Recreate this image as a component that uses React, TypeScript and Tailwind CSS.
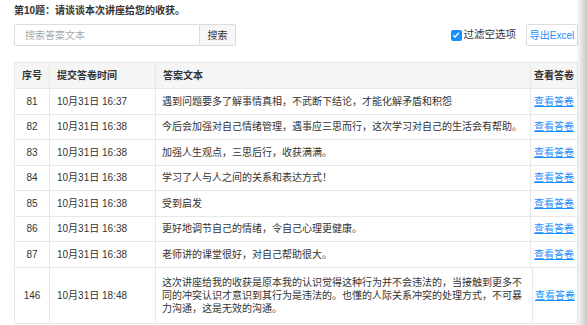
import React from 'react';

type Row = { no: number; time: string; text: React.ReactNode };

const rows: Row[] = [
  { no: 81, time: '10月31日 16:37', text: '遇到问题要多了解事情真相，不武断下结论，才能化解矛盾和积怨' },
  { no: 82, time: '10月31日 16:38', text: '今后会加强对自己情绪管理，遇事应三思而行，这次学习对自己的生活会有帮助。' },
  { no: 83, time: '10月31日 16:38', text: '加强人生观点，三思后行，收获满满。' },
  { no: 84, time: '10月31日 16:38', text: '学习了人与人之间的关系和表达方式！' },
  { no: 85, time: '10月31日 16:38', text: '受到启发' },
  { no: 86, time: '10月31日 16:38', text: '更好地调节自己的情绪，令自己心理更健康。' },
  { no: 87, time: '10月31日 16:38', text: '老师讲的课堂很好，对自己帮助很大。' },
];

const longAnswer = (
  <>
    这次讲座给我的收获是原本我的认识觉得这种行为并不会违法的，当接触到更多不
    <br />
    同的冲突认识才意识到其行为是违法的。也懂的人际关系冲突的处理方式，不可暴
    <br />
    力沟通，这是无效的沟通。
  </>
);

const font = { fontFamily: '"Liberation Sans", "Noto Sans CJK SC", sans-serif' };

function Cols({ last }: { last: number }) {
  return (
    <colgroup>
      <col className="w-[35px]" />
      <col className="w-[106px]" />
      <col style={{ width: last }} />
      <col />
    </colgroup>
  );
}

export default function App() {
  return (
    <div className="relative w-[587px] h-[325px] overflow-hidden bg-white text-[#333]" style={font}>
      <div className="pl-[14px] pt-[4px]">
        <h3 className="text-[10px] font-bold leading-[13px] text-[#333]">第10题：请谈谈本次讲座给您的收获。</h3>

        <div className="mt-[7px] flex items-center w-[564px]">
          <div className="flex h-[22px]">
            <input
              className="w-[186px] h-full border border-[#dcdcdc] rounded-l-[2px] px-[10px] text-[10px] outline-none placeholder:text-[#aaa]"
              placeholder="搜索答案文本"
            />
            <button className="h-full w-[36px] border border-l-0 border-[#dcdcdc] rounded-r-[2px] bg-[#f7f7f7] text-[10px] text-[#333]">
              搜索
            </button>
          </div>
          <div className="ml-auto flex items-center gap-[2px] text-[10.5px] text-[#333]">
            <span className="w-[11px] h-[11px] rounded-[2px] bg-[#1890ff] flex items-center justify-center">
              <svg width="8" height="8" viewBox="0 0 8 8">
                <path d="M1.2 4.2 L3.2 6 L6.8 1.8" fill="none" stroke="white" strokeWidth="1.4" />
              </svg>
            </span>
            过滤空选项
          </div>
          <button className="ml-[10px] h-[22px] w-[52px] border border-[#dcdcdc] rounded-[2px] bg-white text-[10px] text-[#1890ff]">
            导出Excel
          </button>
        </div>

        <table className="mt-[16px] w-[564px] table-fixed border-collapse text-[10px]">
          <Cols last={375} />
          <thead>
            <tr className="h-[26px] bg-[#f5f5f5]">
              <th className="border border-[#e8e8e8] font-bold text-center">序号</th>
              <th className="border border-[#e8e8e8] font-bold text-left pl-[7px]">提交答卷时间</th>
              <th className="border border-[#e8e8e8] font-bold text-left pl-[7px]">答案文本</th>
              <th className="border border-[#e8e8e8] font-bold text-center">查看答卷</th>
            </tr>
          </thead>
          <tbody>
            {rows.map(r => (
              <tr key={r.no} className="h-[25.5px]">
                <td className="border border-[#e8e8e8] text-center">{r.no}</td>
                <td className="border border-[#e8e8e8] pl-[7px] whitespace-nowrap">{r.time}</td>
                <td className="border border-[#e8e8e8] pl-[6px] whitespace-nowrap">{r.text}</td>
                <td className="border border-[#e8e8e8] text-center">
                  <a className="text-[#1890ff] underline">查看答卷</a>
                </td>
              </tr>
            ))}
          </tbody>
        </table>

        <table className="w-[564px] table-fixed border-collapse text-[10px]">
          <Cols last={377} />
          <tbody>
            <tr className="h-[56px]">
              <td className="border border-t-0 border-[#e8e8e8] text-center">146</td>
              <td className="border border-t-0 border-[#e8e8e8] pl-[7px] whitespace-nowrap">10月31日 18:48</td>
              <td className="border border-t-0 border-[#e8e8e8] pl-[6px] leading-[13px] whitespace-nowrap">{longAnswer}</td>
              <td className="border border-t-0 border-[#e8e8e8] text-center">
                <a className="text-[#1890ff] underline">查看答卷</a>
              </td>
            </tr>
          </tbody>
        </table>
      </div>

      <div className="absolute top-0 right-0 h-full w-[11px] bg-gradient-to-r from-transparent to-[#c8c8c8]" />
    </div>
  );
}
